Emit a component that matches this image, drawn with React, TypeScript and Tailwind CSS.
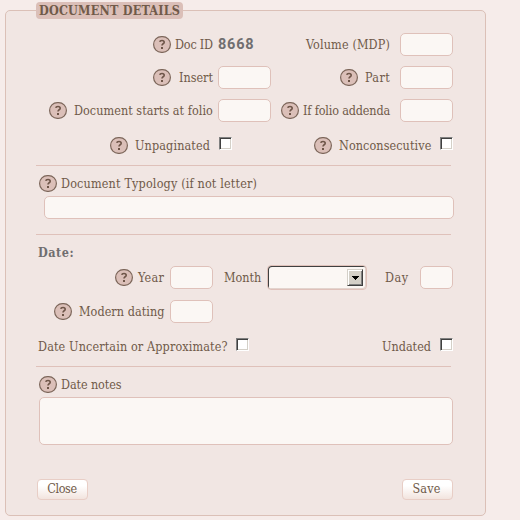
import type { ReactNode } from "react";

function Help({ className = "" }: { className?: string }) {
  return (
    <svg viewBox="0 0 18 17" className={`h-[17px] w-[18px] shrink-0 ${className}`} aria-label="Help">
      <rect x="0.6" y="0.6" width="16.8" height="15.8" rx="7.8" fill="#dbbfb8" stroke="#7c665a" strokeWidth="1.200" />
      <path d="M6.800 5.800C6.900 4.800 7.700 4.500 9 4.500c1.400 0 2.200.6 2.200 1.700 0 1.600-2.200 1.500-2.200 3.300" fill="none" stroke="#6e5548" strokeWidth="1.600" />
      <rect x="8" y="11" width="2" height="2" fill="#6e5548" />
    </svg>
  );
}

function Row({ className, children }: { className: string; children: ReactNode }) {
  return <div className={`flex items-start ${className}`}>{children}</div>;
}

function Label({ className, children }: { className: string; children: ReactNode }) {
  return <label className={`shrink-0 leading-[17px] whitespace-nowrap ${className}`}>{children}</label>;
}

function Field({ className }: { className: string }) {
  return <input type="text" className={`block shrink-0 rounded-[5px] border border-[#dfc1ba] bg-[#fbf7f4] px-1 outline-none ${className}`} />;
}

function Check() {
  return (
    <input
      type="checkbox"
      className="block size-[13px] shrink-0 appearance-none border border-t-[#808080] border-r-white border-b-white border-l-[#808080] bg-white shadow-[inset_1px_1px_0_#404040,inset_-1px_-1px_0_#d4d0c8]"
    />
  );
}

function Button({ children, className }: { children: ReactNode; className: string }) {
  return (
    <button className={`h-[21px] w-[51px] rounded-[4px] border border-[#e8cec6] bg-linear-to-b from-white from-30% to-[#f2e4de] pb-px text-center leading-[18px] ${className}`}>
      {children}
    </button>
  );
}

export default function App() {
  return (
    <div className="h-[520px] w-[520px] overflow-hidden bg-[#f6ecea] pt-[10px] pl-[5px] font-['DejaVu_Serif_Condensed','DejaVu_Serif',serif] text-[12.5px] text-[#705a49]">
      <div className="h-[506px] w-[481px] rounded-[5px] border border-[#dbc0b7] bg-[#f1e6e3] pl-[30px]">
        <h1 className="-mt-[9px] h-[17px] w-[147px] rounded-[4px] bg-[#dbbfb8] pl-[3px] leading-[17px] font-bold tracking-[0.2px] whitespace-nowrap">
          DOCUMENT DETAILS
        </h1>

        <Row className="mt-[14px] h-[33px]">
          <Help className="mt-[3px] ml-[117px]" />
          <Label className="mt-[3px] ml-[4px] w-[43px] tracking-[-0.2px]">Doc ID</Label>
          <span className="mt-[3px] w-[88px] font-[Roboto,sans-serif] text-[14.5px] leading-[17px] font-bold tracking-[0.8px] text-[#706e70]">8668</span>
          <Label className="mt-[3px] w-[94px] tracking-[0.13px]">Volume (MDP)</Label>
          <Field className="h-[23px] w-[53px]" />
        </Row>
        <Row className="h-[33px]">
          <Help className="mt-[3px] ml-[117px]" />
          <Label className="mt-[3px] ml-[8px] w-[39px]">Insert</Label>
          <Field className="h-[23px] w-[53px]" />
          <Help className="mt-[3px] ml-[69px]" />
          <Label className="mt-[3px] ml-[7px] w-[35px] tracking-[0.35px]">Part</Label>
          <Field className="h-[23px] w-[53px]" />
        </Row>
        <Row className="h-[38px]">
          <Help className="mt-[3px] ml-[13px]" />
          <Label className="mt-[3px] ml-[7px] w-[144px] tracking-[0.04px]">Document starts at folio</Label>
          <Field className="h-[23px] w-[53px]" />
          <Help className="mt-[3px] ml-[10px]" />
          <Label className="mt-[3px] ml-[4px] w-[97px] tracking-[-0.16px]">If folio addenda</Label>
          <Field className="h-[23px] w-[53px]" />
        </Row>
        <Row className="h-[28px]">
          <Help className="ml-[74px]" />
          <Label className="ml-[7px] w-[84px] tracking-[0.12px]">Unpaginated</Label>
          <Check />
          <Help className="ml-[82px]" />
          <Label className="ml-[7px] w-[101px] tracking-[0.08px]">Nonconsecutive</Label>
          <Check />
        </Row>

        <hr className="w-[415px] border-[#dfc1ba]" />
        <Row className="mt-[9px] h-[21px]">
          <Help className="ml-[3px]" />
          <Label className="ml-[4px] tracking-[0.16px]">Document Typology (if not letter)</Label>
        </Row>
        <Field className="ml-[8px] h-[23px] w-[410px]" />

        <hr className="mt-[15px] w-[415px] border-[#dfc1ba]" />
        <h2 className="mt-[9px] ml-[2px] h-[21px] leading-[17px] font-bold tracking-[0.5px] text-[#706e70]">Date:</h2>
        <Row className="h-[35px]">
          <Help className="mt-[4px] ml-[79px]" />
          <Label className="mt-[4px] ml-[5px] w-[32px] tracking-[0.25px]">Year</Label>
          <Field className="mt-px h-[23px] w-[43px]" />
          <Label className="mt-[4px] ml-[11px] w-[43px]">Month</Label>
          <div className="flex h-[25px] w-[100px] items-center justify-end rounded-[4px] border border-[#dfc1ba] bg-[#fbf7f4] pr-[3px] shadow-[inset_1px_1px_0_#404040,inset_-1px_-1px_0_#e3d4ce]">
            <div className="flex h-[17px] w-4 items-center justify-center border border-t-[#d4d0c8] border-r-[#404040] border-b-[#404040] border-l-[#d4d0c8] bg-[#d4d0c8] shadow-[inset_1px_1px_0_white,inset_-1px_-1px_0_#808080]">
              <svg viewBox="0 0 7 4" className="h-1 w-[7px]" shapeRendering="crispEdges">
                <path d="M0 0h7v1H6v1H5v1H4v1H3V3H2V2H1V1H0z" fill="#000" />
              </svg>
            </div>
          </div>
          <Label className="mt-[4px] ml-[18px] w-[35px] tracking-[0.5px]">Day</Label>
          <Field className="mt-px h-[23px] w-[33px]" />
        </Row>
        <Row className="h-[38px]">
          <Help className="mt-[3px] ml-[18px]" />
          <Label className="mt-[3px] ml-[7px] w-[91px] tracking-[0.05px]">Modern dating</Label>
          <Field className="h-[23px] w-[43px]" />
        </Row>
        <Row className="h-[28px]">
          <Label className="ml-[2px] w-[198px] tracking-[0.12px]">Date Uncertain or Approximate?</Label>
          <Check />
          <Label className="ml-[133px] w-[58px]">Undated</Label>
          <Check />
        </Row>

        <hr className="w-[415px] border-[#dfc1ba]" />
        <Row className="mt-[9px] h-[21px]">
          <Help className="ml-[3px]" />
          <Label className="ml-[4px] tracking-[-0.1px]">Date notes</Label>
        </Row>
        <textarea className="ml-[3px] block h-[48px] w-[414px] resize-none rounded-[5px] border border-[#dfc1ba] bg-[#fbf7f4] p-1 outline-none" />
        <div className="mt-[34px] ml-px flex w-[416px] justify-between">
          <Button className="pr-px tracking-[-0.4px]">Close</Button>
          <Button className="pr-0.5 tracking-[0.2px]">Save</Button>
        </div>
      </div>
    </div>
  );
}
